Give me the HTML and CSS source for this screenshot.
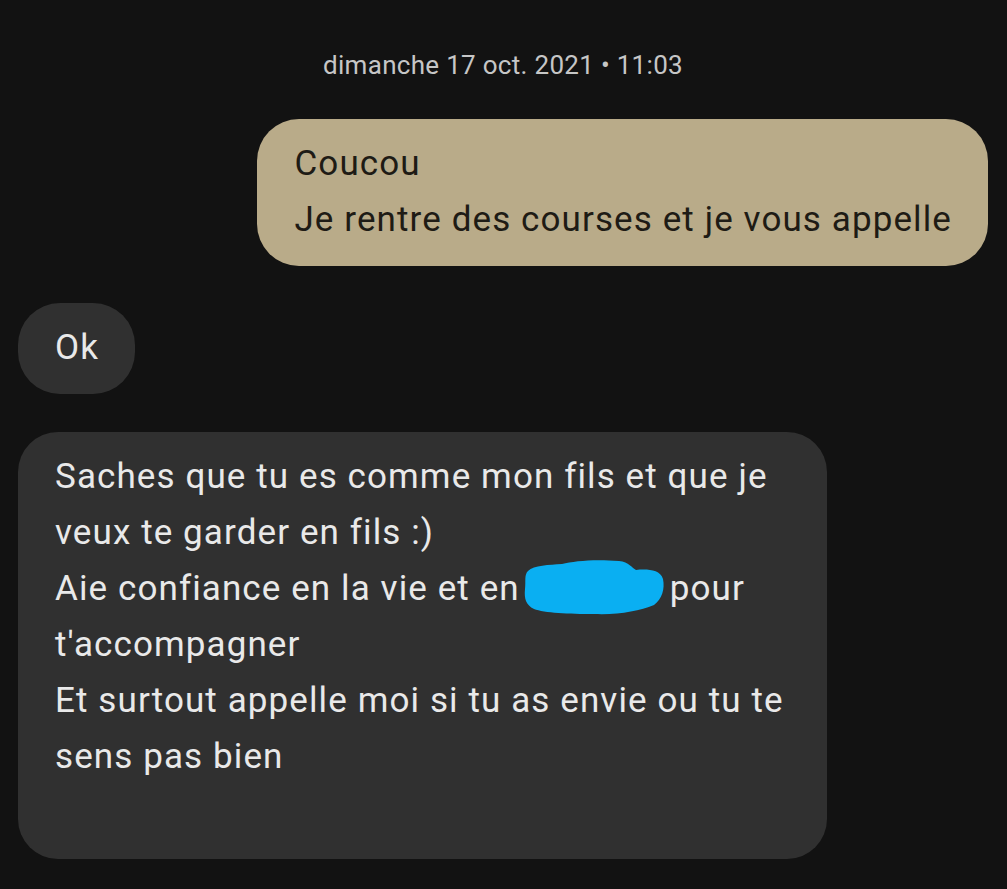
FILE: index.html
```html
<!DOCTYPE html>
<html lang="fr">
<head>
    <meta charset="UTF-8">
    <meta name="viewport" content="width=device-width, initial-scale=1.0">
    <title>Messages</title>
    <link rel="stylesheet" href="styles.css">
</head>
<body>
    <div class="thread">
        <div class="stamp">dimanche 17 oct. 2021 • 11:03</div>

        <div class="bubble sent">
            Coucou<br>
            Je rentre des courses et je vous appelle
        </div>

        <div class="bubble received">Ok</div>

        <div class="bubble received long">
            Saches que tu es comme mon fils et que je<br>
            veux te garder en fils :)<br>
            Aie confiance en la vie et en<span class="hidden-name"><svg width="142" height="56" viewBox="0 0 142 56"><path d="M4 12 C10 6 25 6 38 5 C50 2 70 0 95 2 C105 3 108 9 112 11 C122 10 136 10 139 20 C141 30 138 40 130 46 C115 52 95 56 70 55 C45 55 20 54 10 50 C2 46 0 40 1 30 C2 22 0 16 4 12 Z" fill="#0aaff2"/></svg></span>pour<br>
            t'accompagner<br>
            Et surtout appelle moi si tu as envie ou tu te<br>
            sens pas bien<br>
            &nbsp;
        </div>
    </div>
</body>
</html>
```

FILE: styles.css
```css
html, body {
    margin: 0;
    background-color: #121212;
}
body {
    font-family: Roboto, "Noto Sans", sans-serif;
}
.thread {
    display: flex;
    flex-direction: column;
    padding: 0 19px 0 18px;
}
.stamp {
    text-align: center;
    color: #c6c6c6;
    font-size: 26px;
    letter-spacing: 0.3px;
    line-height: 30px;
    margin: 50px 0 39px 0;
}
.bubble {
    font-size: 35px;
    letter-spacing: 1.1px;
    line-height: 56px;
    padding: 17px 36px 18px 37px;
    border-radius: 42px;
    box-sizing: border-box;
}
.sent {
    align-self: flex-end;
    background-color: #b9ab89;
    color: #1e1b15;
}
.received {
    align-self: flex-start;
    background-color: #303030;
    color: #e9e9e9;
    margin-top: 37px;
}
.received + .received {
    margin-top: 38px;
}
.long {
    width: 809px;
    border-radius: 40px;
}
.hidden-name {
    display: inline-block;
    width: 142px;
    height: 56px;
    margin: 0 4px 0 4px;
    vertical-align: top;
}
.hidden-name svg {
    display: block;
    margin-top: -2px;
}
```
